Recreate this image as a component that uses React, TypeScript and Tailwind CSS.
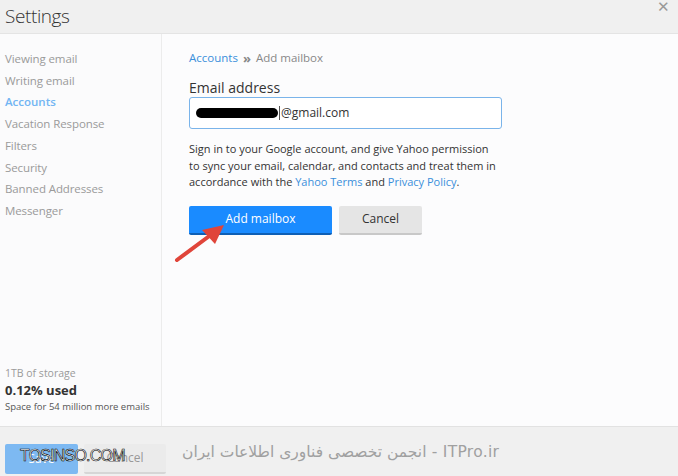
import React from "react";

const font = { fontFamily: '"Open Sans", "Noto Sans", sans-serif' };

export default function App() {
  const nav = [
    "Viewing email",
    "Writing email",
    "Accounts",
    "Vacation Response",
    "Filters",
    "Security",
    "Banned Addresses",
    "Messenger",
  ];
  return (
    <div
      className="w-[678px] h-[476px] flex flex-col bg-[#fcfcfd] overflow-hidden relative"
      style={font}
    >
      <header className="h-[34px] bg-[#f0f0f0] border-b border-[#e4e4e4] flex items-center px-[5px] relative">
        <span className="text-[19px] font-light text-[#333] tracking-[-0.4px]">Settings</span>
        <span className="absolute right-[8px] top-[-5px] text-[15px] text-[#999]">✕</span>
      </header>
      <div className="flex-1 flex min-h-0">
        <aside className="w-[162px] border-r border-[#ececec] bg-[#fbfbfc] flex flex-col justify-between pt-[14px] pb-[12px] pl-[5px]">
          <ul className="flex flex-col">
            {nav.map((n) => (
              <li
                key={n}
                className={
                  n === "Accounts"
                    ? "text-[11.5px] leading-[21.7px] font-semibold text-[#72b5f3]"
                    : "text-[11.5px] leading-[21.7px] text-[#9a9a9a] tracking-[-0.1px]"
                }
              >
                {n}
              </li>
            ))}
          </ul>
          <div className="flex flex-col">
            <span className="text-[10.5px] leading-[16px] text-[#9a9a9a]">1TB of storage</span>
            <span className="text-[13px] leading-[18px] font-bold text-[#333]">0.12% used</span>
            <span className="text-[9.5px] leading-[15px] text-[#555]">Space for 54 million more emails</span>
          </div>
        </aside>
        <main className="flex-1 pl-[27px] pt-[16px] relative">
          <div className="flex items-center gap-[5px] text-[11.5px] leading-[16px]">
            <span className="text-[#3a8fdb]">Accounts</span>
            <span className="text-[#888] text-[13px] font-bold leading-[16px]">»</span>
            <span className="text-[#888]">Add mailbox</span>
          </div>
          <div className="mt-[13px] text-[14px] leading-[18px] text-[#333]">Email address</div>
          <div className="w-[313px] h-[32px] border border-[#7ab4ea] rounded-[3px] bg-white flex items-center pl-[6px]">
            <span className="w-[82px] h-[10px] bg-black rounded-[5px]" />
            <span className="w-[1px] h-[14px] bg-[#555] ml-[1px]" />
            <span className="text-[12px] text-[#333] ml-[1px]">@gmail.com</span>
          </div>
          <p className="mt-[12px] w-[330px] text-[11px] leading-[16.5px] text-[#333]">
            Sign in to your Google account, and give Yahoo permission
            <br />
            to sync your email, calendar, and contacts and treat them in
            <br />
            accordance with the <span className="text-[#3a8fdb]">Yahoo Terms</span> and{" "}
            <span className="text-[#3a8fdb]">Privacy Policy</span>.
          </p>
          <div className="mt-[15px] flex gap-[7px]">
            <button className="w-[143px] h-[29px] bg-[#1a8bff] border-b-2 border-[#0e5fb5] rounded-[2px] text-white text-[12px]">
              Add mailbox
            </button>
            <button className="w-[83px] h-[29px] bg-[#e5e5e5] border-b-2 border-[#c8c8c8] rounded-[2px] text-[#333] text-[12px]">
              Cancel
            </button>
          </div>
          <svg
            className="absolute left-[10px] top-[183px]"
            width="60"
            height="50"
            viewBox="0 0 60 50"
          >
            <line x1="5" y1="43" x2="40" y2="17" stroke="#e0453a" strokeWidth="4" strokeLinecap="round" />
            <polygon points="52,8 30,13 43,27" fill="#e0453a" />
          </svg>
        </main>
      </div>
      <footer className="h-[50px] bg-[#f0f0f0] border-t border-[#e2e2e2] flex items-center pl-[5px] gap-[6px] relative">
        <button className="w-[73px] h-[30px] mt-[14px] bg-[#7db9f2] rounded-[2px] text-white text-[12px]">
          Save
        </button>
        <button className="w-[82px] h-[30px] mt-[14px] bg-[#ebebeb] border-b-2 border-[#d6d6d6] rounded-[2px] text-[#999] text-[12px]">
          Cancel
        </button>
        <span
          className="ml-[10px] mt-[2px] text-[15.5px] text-[#a0a0a0] tracking-[0.3px]"
          style={{ fontFamily: '"DejaVu Sans", "Noto Sans", sans-serif', direction: "rtl" }}
        >
          ITPro.ir - انجمن تخصصی فناوری اطلاعات ایران
        </span>
        <span
          className="absolute left-[20px] top-[17px] text-[16px] text-white tracking-[-0.8px]"
          style={{
            fontFamily: '"Liberation Sans", sans-serif',
            WebkitTextStroke: "0.6px #000",
          }}
        >
          TOSINSO.COM
        </span>
      </footer>
    </div>
  );
}
